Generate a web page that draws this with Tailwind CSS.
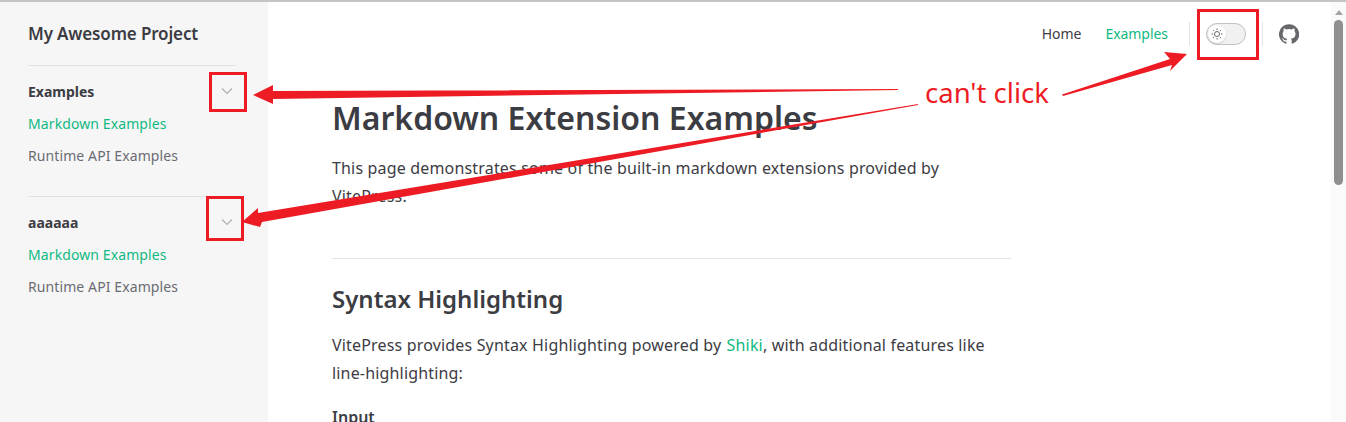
<!DOCTYPE html>
<html lang="en">
<head>
<meta charset="utf-8">
<title>Markdown Extension Examples</title>
<script src="https://cdn.jsdelivr.net/npm/@tailwindcss/browser@4"></script>
</head>
<body class="relative h-[422px] w-[1346px] overflow-hidden bg-white font-['Noto_Sans',sans-serif] text-[#3c3c43]">
<div class="h-[2px] bg-[#c4c4c4]"></div>
<div class="flex h-[420px]">
  <aside class="w-[268px] shrink-0 bg-[#f6f6f7] pl-7 pr-8">
    <div class="flex h-[64px] items-center border-b border-[#e2e2e3] text-[17px] font-semibold tracking-[-0.15px]">My Awesome Project</div>
    <section class="h-[131px] border-b border-[#e2e2e3] pt-[15px]">
      <div class="flex h-5 items-center justify-between">
        <h2 class="text-[14px] font-bold tracking-[0px]">Examples</h2>
        <svg class="mr-[2px] h-[14px] w-[14px] text-[#b0b0b3]" viewBox="0 0 14 14" fill="none" stroke="currentColor" stroke-width="1.200"><path d="M2 4.500l5 5 5-5"/></svg>
      </div>
      <a class="mt-[13px] block h-5 text-[14px] leading-5 tracking-[0.1px] text-[#10b981]">Markdown Examples</a>
      <a class="mt-3 block h-5 text-[14px] leading-5 tracking-[0.1px] text-[#6b6b72]">Runtime API Examples</a>
    </section>
    <section class="pt-[15px]">
      <div class="flex h-5 items-center justify-between">
        <h2 class="text-[14px] font-bold tracking-[0px]">aaaaaa</h2>
        <svg class="mr-[2px] h-[14px] w-[14px] text-[#b0b0b3]" viewBox="0 0 14 14" fill="none" stroke="currentColor" stroke-width="1.200"><path d="M2 4.500l5 5 5-5"/></svg>
      </div>
      <a class="mt-[13px] block h-5 text-[14px] leading-5 tracking-[0.1px] text-[#10b981]">Markdown Examples</a>
      <a class="mt-3 block h-5 text-[14px] leading-5 tracking-[0.1px] text-[#6b6b72]">Runtime API Examples</a>
    </section>
  </aside>
  <div class="min-w-0 flex-1">
    <header class="flex h-[64px] items-center justify-end pr-[32px]">
      <nav class="flex items-center gap-6 pb-[1px] text-[14px] tracking-[-0.05px]">
        <a>Home</a>
        <a class="text-[#10b981]">Examples</a>
      </nav>
      <div class="ml-[21px] h-6 w-px bg-[#e2e2e3]"></div>
      <div class="ml-4 flex h-[22px] w-10 items-center rounded-full border border-[#c2c2c4] bg-[#f1f1f2] pl-[1px]">
        <span class="flex h-[18px] w-[18px] items-center justify-center rounded-full bg-white shadow-[0_1px_2px_rgba(0,0,0,0.15)]">
          <svg class="h-3 w-3 text-[#67676c]" viewBox="0 0 24 24" fill="none" stroke="currentColor" stroke-width="2"><circle cx="12" cy="12" r="5"/><path stroke-dasharray="3 3" d="M12 1v3M12 20v3M1 12h3M20 12h3M4.200 4.200l2 2M17.800 17.800l2 2M4.200 19.800l2-2M17.800 6.200l2-2"/></svg>
        </span>
      </div>
      <div class="ml-4 h-6 w-px bg-[#e2e2e3]"></div>
      <svg class="ml-[16px] h-5 w-5 text-[#67676c]" viewBox="0 0 24 24" fill="currentColor"><path d="M12 .3a12 12 0 0 0-3.800 23.400c.6.100.8-.3.800-.6v-2c-3.300.7-4-1.600-4-1.600-.6-1.400-1.400-1.800-1.400-1.800-1-.7.100-.7.100-.7 1.200.1 1.900 1.200 1.900 1.200 1 1.800 2.800 1.300 3.500 1 .1-.8.400-1.300.8-1.600-2.700-.3-5.500-1.300-5.500-6 0-1.200.5-2.300 1.300-3.100-.2-.4-.6-1.600 0-3.200 0 0 1-.3 3.400 1.200a11.500 11.500 0 0 1 6 0c2.300-1.500 3.300-1.200 3.300-1.200.7 1.600.3 2.800.1 3.200.8.800 1.300 1.900 1.300 3.200 0 4.600-2.800 5.600-5.500 5.900.5.400.9 1.100.9 2.200v3.300c0 .3.200.7.800.6A12 12 0 0 0 12 .3"/></svg>
    </header>
    <main class="ml-[64px] w-[679px]">
      <h1 class="mt-[30px] text-[32px] leading-[44px] font-semibold tracking-[0px]">Markdown Extension Examples</h1>
      <p class="mt-[14px] w-[640px] text-[16px] leading-7 tracking-[0.17px]">This page demonstrates some of the built-in markdown extensions provided by VitePress.</p>
      <h2 class="mt-[48px] border-t border-[#e2e2e3] pt-[24px] text-[24px] leading-8 font-semibold tracking-[0px]">Syntax Highlighting</h2>
      <p class="mt-[16px] w-[670px] text-[16px] leading-7 tracking-[0.17px]">VitePress provides Syntax Highlighting powered by <a class="ml-[1px] text-[#10b981]">Shiki</a>, with additional features like <span class="whitespace-nowrap">line-highlighting:</span></p>
      <h3 class="mt-[18px] text-[16px] leading-6 font-semibold">Input</h3>
    </main>
  </div>
  <div class="relative w-[15px] shrink-0 bg-[#fafafa]">
    <div class="mx-auto mt-[8px] h-0 w-0 border-x-[4px] border-b-[5px] border-x-transparent border-b-[#a3a3a3]"></div>
    <div class="absolute top-[18px] left-[3px] h-[165px] w-[9px] rounded-full bg-[#8f8f8f]"></div>
  </div>
</div>

<div class="pointer-events-none absolute inset-0">
  <svg class="absolute inset-0 h-[422px] w-[1346px]" viewBox="0 0 1346 422" fill="#ed1c24">
    <g fill="none" stroke="#ed1c24" stroke-width="3">
      <rect x="210.500" y="73.500" width="35" height="37"/>
      <rect x="207.500" y="197.500" width="35" height="42"/>
      <rect x="1198.500" y="10.500" width="59" height="48"/>
    </g>
    <polygon points="253,95 273,85 273,91 898,89 898,90 273,99 273,104"/>
    <polygon points="242,222 258,208 258,213 918,104 918,105 262,222 260,227"/>
    <polygon points="1062,94.500 1170,59 1164,52 1187,54 1170,71 1172,65 1063,96"/>
  </svg>
  <span class="absolute top-[75px] left-[925px] font-['Noto_Sans',sans-serif] text-[27.500px] leading-9 text-[#ed1c24]">can't click</span>
</div>
</body>
</html>
